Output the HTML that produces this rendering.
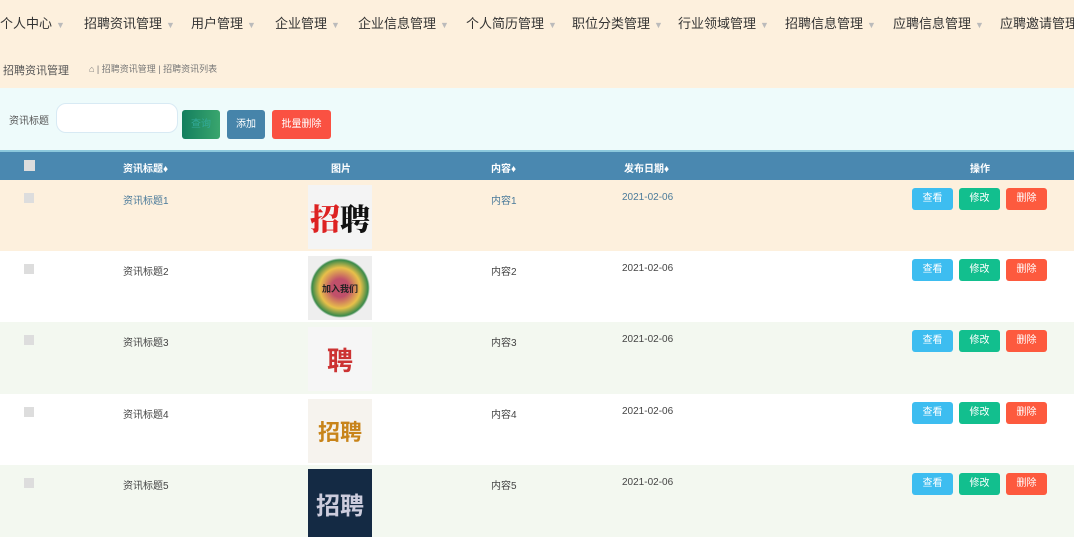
<!DOCTYPE html>
<html><head><meta charset="utf-8"><style>
*{margin:0;padding:0;box-sizing:border-box}
body{width:1074px;height:537px;overflow:hidden;font-family:"Liberation Sans","Noto Sans CJK SC",sans-serif;background:#fff;position:relative;color:#333}
.abs{position:absolute}
.nav{top:0;left:0;width:1074px;height:44px;background:#fdf0dd}
.nav span{position:absolute;top:13px;font-size:13px;color:#333;white-space:nowrap}
.nav i{font-style:normal;color:#bbb;font-size:9px;margin-left:4px}
.bc{top:44px;left:0;width:1074px;height:44px;background:#fdf0dd}
.flt{top:88px;left:0;width:1074px;height:62px;background:#eefbfb}
.hd{top:150px;left:0;width:1074px;height:30px;background:#4a88b0;border-top:2px solid #8cc8dc}
.hd span{position:absolute;top:8px;font-size:10px;color:#fff;font-weight:bold}
.row{left:0;width:1074px;height:72px}
.row span{position:absolute;top:12px;font-size:10px;color:#444}
.cb{position:absolute;left:24px;top:13px;width:10px;height:10px;background:#ddd}
.btn{position:absolute;top:8px;width:41px;height:22px;border-radius:3px;color:#fff;font-size:10px;text-align:center;line-height:22px}
.img{position:absolute;left:308px;top:5px;width:64px;height:64px;display:flex;align-items:center;justify-content:center;font-weight:bold}
</style></head><body>
<div class="abs nav">
<span style="left:0">个人中心<i>▼</i></span>
<span style="left:84px">招聘资讯管理<i>▼</i></span>
<span style="left:191px">用户管理<i>▼</i></span>
<span style="left:275px">企业管理<i>▼</i></span>
<span style="left:358px">企业信息管理<i>▼</i></span>
<span style="left:466px">个人简历管理<i>▼</i></span>
<span style="left:572px">职位分类管理<i>▼</i></span>
<span style="left:678px">行业领域管理<i>▼</i></span>
<span style="left:785px">招聘信息管理<i>▼</i></span>
<span style="left:893px">应聘信息管理<i>▼</i></span>
<span style="left:1000px">应聘邀请管理</span>
</div>
<div class="abs bc">
<span class="abs" style="left:3px;top:18px;font-size:11px;color:#555">招聘资讯管理</span>
<span class="abs" style="left:89px;top:18px;font-size:9px;color:#777">⌂ | 招聘资讯管理 | 招聘资讯列表</span>
</div>
<div class="abs flt">
<span class="abs" style="left:9px;top:24px;font-size:10px;color:#555">资讯标题</span>
<div class="abs" style="left:56px;top:15px;width:122px;height:30px;border-radius:10px;background:#fff;border:1px solid #d8eaf4"></div>
<div class="abs" style="left:182px;top:22px;width:38px;height:29px;border-radius:3px;background:linear-gradient(90deg,#137e5e,#3aa66e);color:#3a9;font-size:10px;text-align:center;line-height:29px">查询</div>
<div class="abs" style="left:227px;top:22px;width:38px;height:29px;border-radius:3px;background:#4684aa;color:#fff;font-size:10px;text-align:center;line-height:29px">添加</div>
<div class="abs" style="left:272px;top:22px;width:59px;height:29px;border-radius:3px;background:#fa5142;color:#fff;font-size:10px;text-align:center;line-height:29px">批量删除</div>
</div>
<div class="abs hd">
<div style="position:absolute;left:24px;top:8px;width:11px;height:11px;background:#ddd"></div>
<span style="left:123px">资讯标题♦</span>
<span style="left:331px">图片</span>
<span style="left:491px">内容♦</span>
<span style="left:624px">发布日期♦</span>
<span style="left:970px">操作</span>
</div>

<div class="abs row" style="top:180px;height:71px;background:#fdf0dd">
<div class="cb"></div><span style="left:123px;color:#4a7a9a">资讯标题1</span>
<div class="img" style="background:#f4f4f4;font-size:30px;font-family:'Noto Serif CJK SC',serif"><b style="color:#d22">招</b><b style="color:#111">聘</b></div>
<span style="left:491px;color:#4a7a9a">内容1</span><span style="left:622px;color:#4a7a9a">2021-02-06</span>
</div>
<div class="abs row" style="top:251px;height:71px;background:#fff">
<div class="cb"></div><span style="left:123px">资讯标题2</span>
<div class="img" style="background:radial-gradient(circle,#c0506a 20%,#e8c04a 45%,#3a8a4a 62%,#eee 66%);font-size:9px;color:#222">加入我们</div>
<span style="left:491px">内容2</span><span style="left:622px">2021-02-06</span>
</div>
<div class="abs row" style="top:322px;background:#f3f8f0">
<div class="cb"></div><span style="left:123px">资讯标题3</span>
<div class="img" style="background:#f6f6f6;font-size:26px;color:#c33">聘</div>
<span style="left:491px">内容3</span><span style="left:622px">2021-02-06</span>
</div>
<div class="abs row" style="top:394px;height:71px;background:#fff">
<div class="cb"></div><span style="left:123px">资讯标题4</span>
<div class="img" style="background:#f6f3ee;font-size:22px;color:#c8841a">招聘</div>
<span style="left:491px">内容4</span><span style="left:622px">2021-02-06</span>
</div>
<div class="abs row" style="top:465px;background:#f3f8f0">
<div class="cb"></div><span style="left:123px">资讯标题5</span>
<div class="img" style="background:#142a44;font-size:24px;color:#ccd;top:4px;height:68px">招聘</div>
<span style="left:491px">内容5</span><span style="left:622px">2021-02-06</span>
</div>

<div class="abs" style="left:0;top:180px">
<div style="position:absolute;top:0"><div class="btn" style="left:912px;background:#3dbdf0">查看</div><div class="btn" style="left:959px;background:#12bf8e">修改</div><div class="btn" style="left:1006px;background:#fd5a3e">删除</div></div>
<div style="position:absolute;top:71px"><div class="btn" style="left:912px;background:#3dbdf0">查看</div><div class="btn" style="left:959px;background:#12bf8e">修改</div><div class="btn" style="left:1006px;background:#fd5a3e">删除</div></div>
<div style="position:absolute;top:142px"><div class="btn" style="left:912px;background:#3dbdf0">查看</div><div class="btn" style="left:959px;background:#12bf8e">修改</div><div class="btn" style="left:1006px;background:#fd5a3e">删除</div></div>
<div style="position:absolute;top:214px"><div class="btn" style="left:912px;background:#3dbdf0">查看</div><div class="btn" style="left:959px;background:#12bf8e">修改</div><div class="btn" style="left:1006px;background:#fd5a3e">删除</div></div>
<div style="position:absolute;top:285px"><div class="btn" style="left:912px;background:#3dbdf0">查看</div><div class="btn" style="left:959px;background:#12bf8e">修改</div><div class="btn" style="left:1006px;background:#fd5a3e">删除</div></div>
</div>
</body></html>
